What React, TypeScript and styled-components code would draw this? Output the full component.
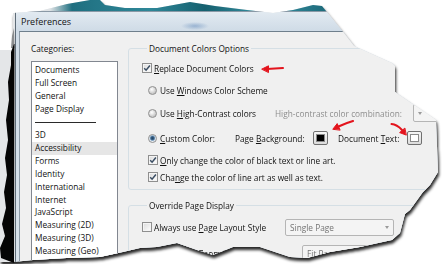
import styled, { createGlobalStyle } from 'styled-components';

const GlobalStyle = createGlobalStyle`
  html, body {
    margin: 0;
    padding: 0;
    background: #fff;
  }
  body {
    font-family: 'Open Sans', 'Noto Sans', sans-serif;
    color: #1b1b1b;
  }
`;

const TORN = `polygon(
  13px 13px, 40px 11px, 67px 4px, 90px 0px, 100px 0px, 105px 5px, 125px 8px,
  157px 8px, 190px 2px, 215px 6px, 247px 10px, 273px 13px, 293px 10px, 313px 5px,
  322px 6px, 340px 28px, 354px 46px, 392px 63px, 395px 66px, 395px 92px,
  436px 120px, 438px 172px, 430px 185px, 423px 192px, 410px 210px, 405px 214px,
  400px 233px, 392px 240px, 360px 247px, 330px 252px, 307px 258px, 290px 257px,
  260px 247px, 233px 247px, 213px 255px, 197px 250px, 177px 243px, 157px 247px,
  140px 248px, 123px 252px, 100px 257px, 67px 258px, 33px 260px, 13px 262px,
  0px 262px, 0px 50px, 13px 50px
)`;

const Stage = styled.div`
  position: relative;
  width: 445px;
  height: 264px;
  overflow: hidden;
  background: #fff;
`;

const Shadow = styled.div`
  height: 100%;
  filter: drop-shadow(1px 3px 1.5px rgba(0, 0, 0, 0.85));
`;

/* the torn sheet: desktop strip on top, a dark gap at the left, dialog in the rest */
const Sheet = styled.div`
  box-sizing: border-box;
  height: 100%;
  display: flex;
  padding: 11px 0 0 15px;
  clip-path: ${TORN};
  background:
    linear-gradient(90deg, #dfe3e6 0px, #dfe3e6 50px, #1f6f80 72px, #2f8798 150px, #15606f 205px, #3a94a6 265px, #1b6878 330px)
      0 0 / 100% 11px no-repeat,
    #e4e6e8;
`;

const Window = styled.div`
  flex: 1;
  min-width: 0;
  display: flex;
  flex-direction: column;
  border-left: 1px solid #5d6b77;
  border-top: 1px solid #8a99a6;
  padding-left: 3px;
  background: linear-gradient(180deg, #e2eaf1 0, #d0dce7 18px, #d8e2eb 100%);
`;

const TitleBar = styled.div`
  flex: none;
  height: 19px;
  display: flex;
  align-items: center;
  padding-left: 2px;
  font-size: 9px;
  color: #141414;
  background: radial-gradient(ellipse 14px 4px at 176px 14px, rgba(80, 125, 180, 0.45), transparent);
`;

const Client = styled.div`
  flex: 1;
  min-height: 0;
  display: grid;
  grid-template-columns: 100px 1fr;
  align-items: start;
  padding-top: 11px;
  border-left: 1px solid #8c9aa6;
  border-top: 1px solid #6f7f8c;
  background: #f0f0f0;
  font-size: 8.3px;
  color: #111;
`;

const Categories = styled.div`
  padding-left: 11px;
`;

const Caption = styled.div`
  line-height: 11px;
  margin-bottom: 7px;
`;

const ListBox = styled.ul`
  list-style: none;
  margin: 0;
  width: 87px;
  height: 230px;
  box-sizing: border-box;
  padding: 2px 0 0;
  border: 1px solid #828790;
  background: #fff;
`;

const Item = styled.li<{ $selected?: boolean }>`
  line-height: 12.95px;
  padding-left: 3px;
  white-space: nowrap;
  background: ${(p) => (p.$selected ? '#e6e6e6' : 'transparent')};
`;

const Divider = styled.li`
  height: 12.95px;
  display: flex;
  align-items: center;
  padding-left: 3px;
  &::after {
    content: '';
    width: 61px;
    height: 1px;
    background: #2a2a2a;
  }
`;

const Options = styled.div`
  padding-left: 8px;
  min-width: 0;
`;

const Group = styled.fieldset<{ $gap?: number }>`
  margin: ${(p) => p.$gap ?? 0}px 0 0;
  padding: 0 0 6px 13px;
  border: 1px solid #d5dfe5;
  border-radius: 3px;
  min-width: 0;
`;

const Legend = styled.legend`
  margin-left: 5px;
  padding: 0 2px;
  line-height: 11px;
`;

const Row = styled.div<{ $gap: number; $indent?: number }>`
  display: flex;
  align-items: center;
  height: 12px;
  margin-top: ${(p) => p.$gap}px;
  padding-left: ${(p) => p.$indent ?? 0}px;
  white-space: nowrap;
`;

const Check = styled.span`
  flex: none;
  width: 10px;
  height: 10px;
  box-sizing: border-box;
  margin-right: 2px;
  border: 1px solid #8f8f8f;
  background: linear-gradient(135deg, #dadada, #ffffff);
  box-shadow: inset 0 0 0 1px #f4f4f4;
  display: flex;
  align-items: center;
  justify-content: center;
`;

const Radio = styled.span<{ $on?: boolean }>`
  flex: none;
  width: 9px;
  height: 9px;
  box-sizing: border-box;
  margin-right: 3px;
  border-radius: 50%;
  border: 1px solid #8f8f8f;
  background: ${(p) =>
    p.$on
      ? 'radial-gradient(circle at 50% 45%, #1f3f5e 0, #3b6389 1.6px, #9cb9d3 2.6px, #e9eef3 3.2px)'
      : 'radial-gradient(circle at 40% 35%, #ffffff 0, #e6e6e6 2px, #c9c9c9 4px)'};
`;

const Text = styled.span<{ $width?: number; $muted?: boolean }>`
  flex: none;
  width: ${(p) => (p.$width ? `${p.$width}px` : 'auto')};
  color: ${(p) => (p.$muted ? '#8d8d8d' : 'inherit')};
`;

const Swatch = styled.span<{ $color: string }>`
  flex: none;
  width: 15px;
  height: 14px;
  box-sizing: border-box;
  padding: 2px;
  border: 1px solid #707070;
  border-radius: 2px;
  background: linear-gradient(#f6f6f6, #dcdcdc);
  &::after {
    content: '';
    display: block;
    height: 100%;
    box-sizing: border-box;
    border: 1px solid #8a8a8a;
    background: ${(p) => p.$color};
  }
`;

const Gap = styled.span<{ $w: number }>`
  flex: none;
  width: ${(p) => p.$w}px;
`;

const Combo = styled.span<{ $width: number; $height?: number }>`
  flex: none;
  width: ${(p) => p.$width}px;
  height: ${(p) => p.$height ?? 17}px;
  box-sizing: border-box;
  display: flex;
  align-items: center;
  justify-content: space-between;
  padding: 0 4px;
  border: 1px solid #b5b5b5;
  border-radius: 2px;
  background: #f4f4f4;
  color: #747474;
  &::after {
    content: '';
    border: 2.5px solid transparent;
    border-top: 3px solid #9a9a9a;
    margin-top: 3px;
  }
`;

const Annotations = styled.svg`
  position: absolute;
  left: 0;
  top: 0;
  pointer-events: none;
`;

function Tick() {
  return (
    <svg width="8" height="8" viewBox="0 0 8 8">
      <path d="M1.2 4.2 L3.1 6.2 L6.9 1.5" fill="none" stroke="#3a4d63" strokeWidth="1.5" />
    </svg>
  );
}

const categories = [
  'Documents',
  'Full Screen',
  'General',
  'Page Display',
  '-',
  '3D',
  'Accessibility',
  'Forms',
  'Identity',
  'International',
  'Internet',
  'JavaScript',
  'Measuring (2D)',
  'Measuring (3D)',
  'Measuring (Geo)',
];

export default function App() {
  return (
    <>
      <GlobalStyle />
      <Stage>
        <Shadow>
          <Sheet>
            <Window>
              <TitleBar>Preferences</TitleBar>
              <Client>
                <Categories>
                  <Caption>Categories:</Caption>
                  <ListBox>
                    {categories.map((c, i) =>
                      c === '-' ? (
                        <Divider key={i} />
                      ) : (
                        <Item key={c} $selected={c === 'Accessibility'}>
                          {c}
                        </Item>
                      )
                    )}
                  </ListBox>
                </Categories>
                <Options>
                  <Group>
                    <Legend>Document Colors Options</Legend>
                    <Row $gap={8}>
                      <Check>
                        <Tick />
                      </Check>
                      <Text>
                        <u>R</u>eplace Document Colors
                      </Text>
                    </Row>
                    <Row $gap={10} $indent={6}>
                      <Radio />
                      <Text>
                        Use <u>W</u>indows Color Scheme
                      </Text>
                    </Row>
                    <Row $gap={11} $indent={6}>
                      <Radio />
                      <Text $width={115}>
                        Use <u>H</u>igh-Contrast colors
                      </Text>
                      <Text $width={138} $muted>
                        High-contrast color combination:
                      </Text>
                      <Combo $width={110} $height={18} />
                    </Row>
                    <Row $gap={13} $indent={6}>
                      <Radio $on />
                      <Text $width={75}>
                        <u>C</u>ustom Color:
                      </Text>
                      <Text $width={78}>
                        Page <u>B</u>ackground:
                      </Text>
                      <Swatch $color="#000" />
                      <Gap $w={10} />
                      <Text $width={69}>
                        Document <u>T</u>ext:
                      </Text>
                      <Swatch $color="#fff" />
                    </Row>
                    <Row $gap={10} $indent={6}>
                      <Check>
                        <Tick />
                      </Check>
                      <Text>
                        <u>O</u>nly change the color of black text or line art.
                      </Text>
                    </Row>
                    <Row $gap={5} $indent={6}>
                      <Check>
                        <Tick />
                      </Check>
                      <Text>
                        Cha<u>n</u>ge the color of line art as well as text.
                      </Text>
                    </Row>
                  </Group>
                  <Group $gap={10}>
                    <Legend>Override Page Display</Legend>
                    <Row $gap={10}>
                      <Check />
                      <Text $width={131}>
                        Always use <u>P</u>age Layout Style
                      </Text>
                      <Combo $width={109}>Single Page</Combo>
                    </Row>
                    <Row $gap={14}>
                      <Check />
                      <Text $width={148}>
                        Always use <u>Z</u>oom Setting
                      </Text>
                      <Combo $width={80}>Fit Page</Combo>
                    </Row>
                  </Group>
                </Options>
              </Client>
            </Window>
          </Sheet>
        </Shadow>
        <Annotations width="445" height="264" viewBox="0 0 445 264">
          <polygon fill="#8a8c8e" points="14,28 12,36 11,48 14.5,48" />
          <polygon
            fill="#050505"
            points="14,44 11,52 11,65 8,82 9,100 6,120 8,140 5,158 7,175 4,192 6,208 2,224 5,236 0,248 1,258 14,263 14.5,44"
          />
          <g fill="#e3141d" stroke="#e3141d" strokeLinecap="round" strokeLinejoin="round">
            <path d="M267 69 Q275 68.6 283 68" fill="none" strokeWidth="2" />
            <path d="M262 69 L268.5 65.8 L268.5 72.2 Z" strokeWidth="1" />
            <path d="M353 121 Q346 123 338.5 126.5" fill="none" strokeWidth="2.2" />
            <path d="M333 129 L337.2 123.6 L340 129.8 Z" strokeWidth="1" />
            <path d="M391.5 124 Q397 124.5 402 130" fill="none" strokeWidth="2" />
            <path d="M406 135 L399.6 132.6 L404.6 128.3 Z" strokeWidth="1" />
          </g>
        </Annotations>
      </Stage>
    </>
  );
}
